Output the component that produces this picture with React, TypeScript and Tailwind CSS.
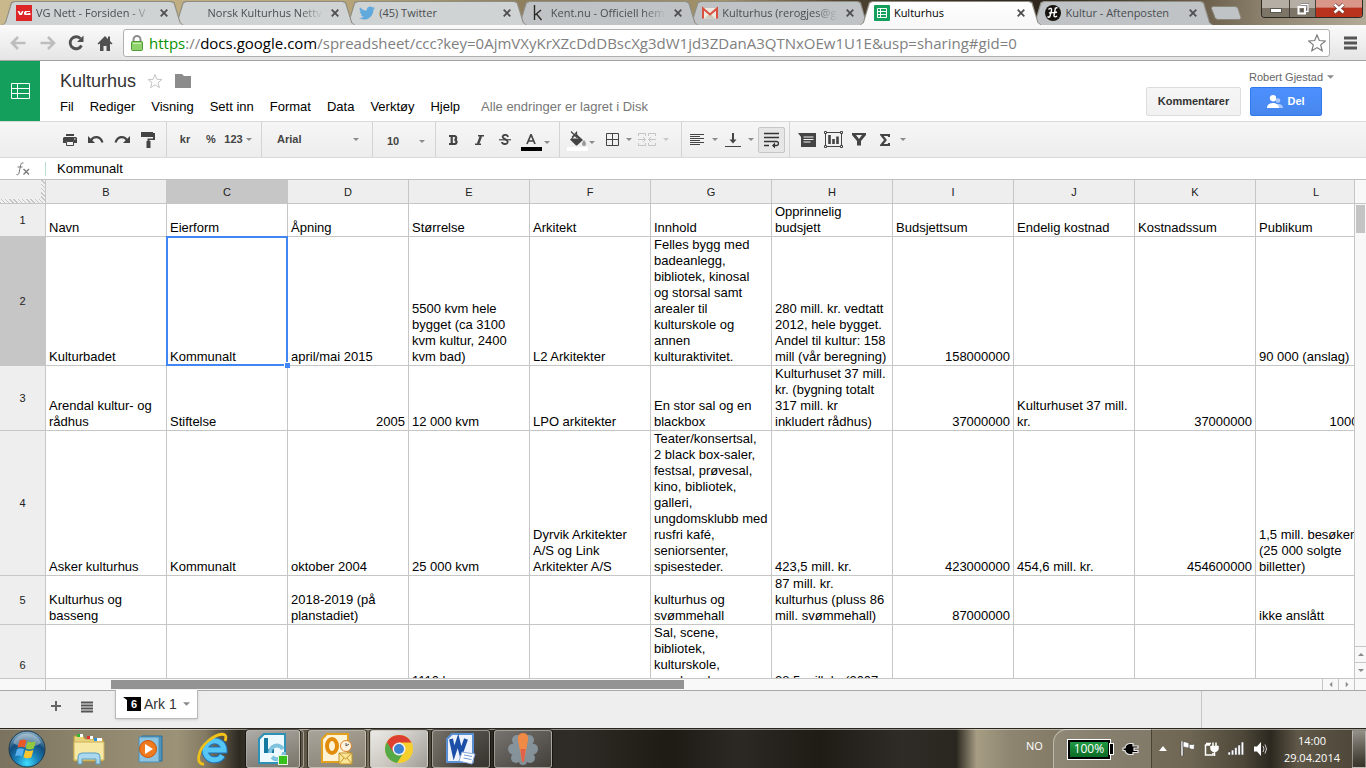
import type { ReactNode } from "react";
import clsx from "clsx";

interface BrowserTab {
  title: string;
  icon: ReactNode;
  active?: boolean;
}

interface SheetRow {
  num: number;
  cells: string[];
}

const COLUMNS = ["B", "C", "D", "E", "F", "G", "H", "I", "J", "K", "L"];
const MENUS = ["Fil", "Rediger", "Visning", "Sett inn", "Format", "Data", "Verktøy", "Hjelp"];

const ROWS: SheetRow[] = [
  {
    num: 1,
    cells: ["Navn", "Eierform", "Åpning", "Størrelse", "Arkitekt", "Innhold", "Opprinnelig\nbudsjett", "Budsjettsum", "Endelig kostnad", "Kostnadssum", "Publikum"],
  },
  {
    num: 2,
    cells: [
      "Kulturbadet",
      "Kommunalt",
      "april/mai 2015",
      "5500 kvm hele\nbygget (ca 3100\nkvm kultur, 2400\nkvm bad)",
      "L2 Arkitekter",
      "Felles bygg med\nbadeanlegg,\nbibliotek, kinosal\nog storsal samt\narealer til\nkulturskole og\nannen\nkulturaktivitet.",
      "280 mill. kr. vedtatt\n2012, hele bygget.\nAndel til kultur: 158\nmill (vår beregning)",
      "158000000",
      "",
      "",
      "90 000 (anslag)",
    ],
  },
  {
    num: 3,
    cells: [
      "Arendal kultur- og\nrådhus",
      "Stiftelse",
      "2005",
      "12 000 kvm",
      "LPO arkitekter",
      "En stor sal og en\nblackbox",
      "Kulturhuset 37 mill.\nkr. (bygning totalt\n317 mill. kr\ninkludert rådhus)",
      "37000000",
      "Kulturhuset 37 mill.\nkr.",
      "37000000",
      "100000",
    ],
  },
  {
    num: 4,
    cells: [
      "Asker kulturhus",
      "Kommunalt",
      "oktober 2004",
      "25 000 kvm",
      "Dyrvik Arkitekter\nA/S og Link\nArkitekter A/S",
      "Teater/konsertsal,\n2 black box-saler,\nfestsal, prøvesal,\nkino, bibliotek,\ngalleri,\nungdomsklubb med\nrusfri kafé,\nseniorsenter,\nspisesteder.",
      "423,5 mill. kr.",
      "423000000",
      "454,6 mill. kr.",
      "454600000",
      "1,5 mill. besøkende\n(25 000 solgte\nbilletter)",
    ],
  },
  {
    num: 5,
    cells: [
      "Kulturhus og\nbasseng",
      "",
      "2018-2019 (på\nplanstadiet)",
      "",
      "",
      "kulturhus og\nsvømmehall",
      "87 mill. kr.\nkulturhus (pluss 86\nmill. svømmehall)",
      "87000000",
      "",
      "",
      "ikke anslått",
    ],
  },
  {
    num: 6,
    cells: [
      "",
      "",
      "",
      "1110 kvm\nbrutto",
      "",
      "Sal, scene,\nbibliotek,\nkulturskole,\nungdomshus,\nkafé",
      "28,5 mill. kr (2007\nkroner)",
      "",
      "",
      "",
      "",
    ],
  },
];

const isNumber = (v: string) => /^\d+$/.test(v);

/* ---------- browser ---------- */

const TABS: BrowserTab[] = [
  {
    title: "VG Nett - Forsiden - V",
    icon: (
      <svg viewBox="0 0 16 16" className="size-4">
        <rect width="16" height="16" fill="#dd2427" />
        <path d="M1.500 6h2l1 2.500L6 6h1.500L6 10H3.500zM9.500 6H14v1H10.500v2H12.500v-.500H11V8h3.500v2H9l-1-.800V7z" fill="#fff" />
      </svg>
    ),
  },
  { title: "Norsk Kulturhus Nettv", icon: null },
  {
    title: "(45) Twitter",
    icon: (
      <svg viewBox="0 0 24 24" className="size-4" fill="#5fa9dd">
        <path d="M24 4.600a10 10 0 0 1-2.800.800 5 5 0 0 0 2.100-2.700 10 10 0 0 1-3.100 1.200 4.900 4.900 0 0 0-8.400 4.500A14 14 0 0 1 1.700 3.200a4.900 4.900 0 0 0 1.500 6.600 5 5 0 0 1-2.200-.600 4.900 4.900 0 0 0 3.900 4.900 5 5 0 0 1-2.200.100 4.900 4.900 0 0 0 4.600 3.400A10 10 0 0 1 0 19.600a14 14 0 0 0 7.500 2.200c9.100 0 14.300-7.700 14-14.600A10 10 0 0 0 24 4.600z" />
      </svg>
    ),
  },
  {
    title: "Kent.nu - Officiell hem",
    icon: (
      <svg viewBox="0 0 16 16" className="size-4" fill="none" stroke="#2b2b26" strokeWidth="1.400">
        <path d="M3.500 0v15M4 10l6-5M5.500 9l5 6" />
      </svg>
    ),
  },
  {
    title: "Kulturhus (rerogjes@g",
    icon: (
      <svg viewBox="0 0 16 16" className="size-4">
        <path d="M1 3h14v10.500H1z" fill="#ece9df" />
        <path d="M3 13.500 8 8l5 5.500z" fill="#cfcbbb" />
        <path d="M1 13.500V3.500l7 6 7-6v10" fill="none" stroke="#d95040" strokeWidth="2" />
      </svg>
    ),
  },
  {
    title: "Kulturhus",
    active: true,
    icon: (
      <svg viewBox="0 0 16 16" className="size-4">
        <rect width="16" height="16" rx="1" fill="#159f5c" />
        <path d="M3.500 3.500h9v9h-9zM3.500 6.500h9M3.500 9.500h9M6.500 3.500v9" fill="none" stroke="#fff" />
      </svg>
    ),
  },
  {
    title: "Kultur - Aftenposten",
    icon: (
      <svg viewBox="0 0 16 16" className="size-4">
        <circle cx="8" cy="8" r="8" fill="#16120e" />
        <path d="M3.500 4.500c2-2 3.500-1 3 1L5 11c0 1.500-1.500 1.500-2.500.500M10.500 2.500 9 10.500c0 2 2 1.500 3 .500M4 8c2-1 5 .500 8-1M11 3l1.500-.500" fill="none" stroke="#fff" strokeWidth="1.400" />
      </svg>
    ),
  },
];

function Tab({ tab, index }: { tab: BrowserTab; index: number }) {
  const z = ["z-[7]", "z-[6]", "z-[5]", "z-[4]", "z-[3]", "z-[8]", "z-[1]"][index];
  return (
    <div className={clsx("relative flex h-[24px] min-w-0 flex-1 items-center pr-[2px] pl-[14px]", z)}>
      <span className="absolute inset-y-0 left-0 -right-[10px] bg-[#8f8d84] [clip-path:polygon(0_100%,3px_90%,9px_5%,12px_0,calc(100%-12px)_0,calc(100%-9px)_5%,calc(100%-3px)_90%,100%_100%)]" />
      <span
        className={clsx(
          "absolute top-[1px] bottom-0 left-[1px] -right-[9px] [clip-path:polygon(0_100%,3px_90%,9px_5%,12px_0,calc(100%-12px)_0,calc(100%-9px)_5%,calc(100%-3px)_90%,100%_100%)]",
          tab.active ? "bg-gradient-to-b from-white to-[#f8f8f8]" : index < 3 ? "bg-[#cfd3d3]" : "bg-[#bfc3c6]"
        )}
      />
      <button className="relative flex min-w-0 flex-1 items-center gap-[4px]">
        <span className="size-4 shrink-0">{tab.icon}</span>
        <span
          className={clsx(
            "flex-1 overflow-hidden text-left font-['Open_Sans',sans-serif] text-[11px] leading-4 whitespace-nowrap",
            tab.title.length > 20 && "[mask-image:linear-gradient(to_right,#000_80%,transparent)]",
            tab.active ? "text-black" : "text-[#4a4d50]"
          )}
        >
          {tab.title}
        </span>
      </button>
      <button aria-label="Lukk fane" className="relative ml-[4px] flex size-4 shrink-0 items-center justify-center">
        <svg viewBox="0 0 8 8" className="size-2" stroke="#4f4f4f" strokeWidth="1.800">
          <path d="M.700.700l6.600 6.600M7.300.700.700 7.300" />
        </svg>
      </button>
    </div>
  );
}

function TabStrip() {
  return (
    <header className="relative flex h-[25px] items-end bg-[linear-gradient(90deg,#c9b88c_0,#b8a67a_25%,#8a7b5a_40%,#a3946c_53%,#4d4230_62%,#2f271d_76%,#6b5f4b_88%,#8f8571_93%,#b3aa98_100%)] pl-[2px]">
      <div className="flex min-w-0 max-w-[1201px] flex-1">
        {TABS.map((tab, i) => (
          <Tab key={tab.title} tab={tab} index={i} />
        ))}
      </div>
      <button aria-label="Ny fane" className="mb-[5px] ml-[8px] h-[14px] w-[31px]">
        <svg viewBox="0 0 31 14" className="h-[14px] w-[31px]">
          <path d="M2 .500h22q2 0 3 2l3 9q0 2-2 2H7q-2 0-3-2L.500 2.500q0-2 1.500-2z" fill="#bfc3c6" stroke="#8a8779" />
        </svg>
      </button>
      <div className="mr-[3px] ml-auto flex h-[18px] self-start overflow-hidden rounded-b-[4px] border border-t-0 border-[#2c2824]">
        <button aria-label="Minimer" className="flex w-[28px] items-center justify-center border-r border-[#443f39] bg-gradient-to-b from-[#b5aea4] from-45% to-[#7d7468] to-50%">
          <svg viewBox="0 0 12 5" className="mt-[4px] h-[5px] w-[12px]">
            <rect x=".500" y=".500" width="11" height="4" fill="#fff" stroke="#5a5650" />
          </svg>
        </button>
        <button aria-label="Gjenopprett" className="flex w-[26px] items-center justify-center border-r border-[#443f39] bg-gradient-to-b from-[#b5aea4] from-45% to-[#7d7468] to-50%">
          <svg viewBox="0 0 12 12" className="size-3" fill="none">
            <path d="M4 1.500h7v7H8.500" stroke="#555" strokeWidth="2.600" />
            <path d="M4 1.500h7v7H8.500" stroke="#fff" strokeWidth="1.400" />
            <path d="M1.500 4h6.500v6.500H1.500z" stroke="#fff" strokeWidth="2" />
            <path d="M4 6.500h1.500v1.500H4z" stroke="#555" />
          </svg>
        </button>
        <button aria-label="Lukk" className="flex w-[46px] items-center justify-center bg-gradient-to-b from-[#d9978a] from-40% to-[#b8321d] to-50%">
          <svg viewBox="0 0 12 11" className="h-[11px] w-[12px]">
            <path d="M1.500 1.500l9 8M10.500 1.500l-9 8" stroke="#6b3a33" strokeWidth="4" />
            <path d="M1.500 1.500l9 8M10.500 1.500l-9 8" stroke="#fff" strokeWidth="2.500" />
          </svg>
        </button>
      </div>
    </header>
  );
}

function AddressBar() {
  return (
    <nav className="flex h-[36px] items-center border-b border-[#a3a3a3] bg-gradient-to-b from-[#fafafa] to-[#e5e5e5] pr-[9px] pl-[10px]">
      <button aria-label="Tilbake" className="mr-[14px]">
        <svg viewBox="0 0 16 14" className="h-[14px] w-4" fill="none" stroke="#bdbdbd" strokeWidth="2.600">
          <path d="M8 1 2 7l6 6M2 7h13.500" />
        </svg>
      </button>
      <button aria-label="Fremover" className="mr-[12px]">
        <svg viewBox="0 0 16 14" className="h-[14px] w-4" fill="none" stroke="#bdbdbd" strokeWidth="2.600">
          <path d="m8 1 6 6-6 6M14 7H.500" />
        </svg>
      </button>
      <button aria-label="Last inn på nytt" className="mr-[13px]">
        <svg viewBox="0 0 16 16" className="size-4">
          <path d="M12.500 3.600A6 6 0 1 0 13.500 10.500" fill="none" stroke="#505050" strokeWidth="2.800" />
          <path d="M15.500.500V7H9z" fill="#505050" />
        </svg>
      </button>
      <button aria-label="Startside" className="mr-[10px]">
        <svg viewBox="0 0 16 16" className="size-4" fill="#505050">
          <path d="M8 1 .500 8.500l1 1L3 8.500V16h3.500v-5h3v5H13V8.500l1.500 1 1-1L13 6V1.500h-2V4z" />
        </svg>
      </button>
      <div className="flex h-[28px] min-w-0 flex-1 items-center rounded-[3px] border border-[#b0b0b0] bg-white pr-[3px] pl-[6px]">
        <svg viewBox="0 0 14 16" className="mr-[5px] h-4 w-[14px] shrink-0">
          <path d="M3.500 8V4.500a3.500 3.500 0 0 1 7 0V8" fill="none" stroke="#8d8d8d" strokeWidth="2" />
          <rect x="1.500" y="6.500" width="11" height="9" rx="1" fill="#8fd16b" stroke="#4e9a35" />
          <path d="M3 8.500h8" stroke="#c9efb4" />
        </svg>
        <div role="textbox" aria-label="Adresse" className="min-w-0 flex-1 overflow-hidden font-['Open_Sans',sans-serif] text-[15px] leading-6 whitespace-nowrap text-[#808080]">
          <span className="text-[#0a9205]">https</span>://<span className="text-black">docs.google.com</span>
          /spreadsheet/ccc?key=0AjmVXyKrXZcDdDBscXg3dW1jd3ZDanA3QTNxOEw1U1E&amp;usp=sharing#gid=0
        </div>
        <button aria-label="Bokmerk siden">
          <svg viewBox="0 0 18 18" className="size-[18px]" fill="#fff" stroke="#7d7d7d" strokeWidth="1.200">
            <path d="m9 1 2.300 5.500 6 .500-4.600 3.900 1.500 5.900L9 13.600l-5.200 3.200 1.500-5.900L.700 7l6-.500z" />
          </svg>
        </button>
      </div>
      <button aria-label="Meny" className="ml-[14px]">
        <svg viewBox="0 0 13 14" className="h-[14px] w-[13px]" fill="#555">
          <path d="M0 0.500h13v3H0zM0 5.500h13v3H0zM0 10.500h13v3H0z" />
        </svg>
      </button>
    </nav>
  );
}

/* ---------- document header ---------- */

function Caret({ light = false, className }: { light?: boolean; className?: string }) {
  return (
    <svg viewBox="0 0 6 3" className={clsx("h-[3px] w-[6px] shrink-0", className)} fill={light ? "#c8c8c8" : "#8a8a8a"}>
      <path d="M0 0h6L3 3z" />
    </svg>
  );
}

function DocHeader() {
  return (
    <div className="flex h-[60px]">
      <a href="#hjem" aria-label="Regneark" className="flex w-[40px] items-center justify-center bg-[#159f5c]">
        <svg viewBox="0 0 19 16" className="h-4 w-[19px]" fill="none" stroke="#fff">
          <path d="M.500.500h18v15H.500zM.500 5.500h18M.500 10.500h18M6.500.500v15" />
        </svg>
      </a>
      <div className="min-w-0 flex-1 pt-[8px] pl-[20px]">
        <div className="flex h-6 items-center">
          <h1 className="text-[18px] leading-6 text-[#333]">Kulturhus</h1>
          <button aria-label="Stjernemerk" className="ml-[11px]">
            <svg viewBox="0 0 16 16" className="size-4" fill="none" stroke="#c4c4c4">
              <path d="m8 1.500 1.800 4.800 5.200.200-4 3.200 1.400 5L8 11.800l-4.400 2.900 1.400-5-4-3.200 5.200-.200z" />
            </svg>
          </button>
          <button aria-label="Flytt til mappe" className="ml-[12px]">
            <svg viewBox="0 0 16 14" className="h-[14px] w-4" fill="#8c8c8c">
              <path d="M0 0h7l2 2h7v12H0z" />
            </svg>
          </button>
        </div>
        <div className="mt-[6px] flex gap-4 text-[13px] leading-4 whitespace-nowrap text-black">
          {MENUS.map((m) => (
            <button key={m}>{m}</button>
          ))}
          <span className="ml-[5px] text-[#777]">Alle endringer er lagret i Disk</span>
        </div>
      </div>
      <div className="pt-[9px] pr-[32px]">
        <button className="ml-auto flex h-[14px] items-center gap-[4px] text-[11px] leading-[14px] text-[#666]">
          Robert Gjestad
          <Caret className="!h-[4px] !w-[7px]" />
        </button>
        <div className="mt-[3px] mr-[12px] flex gap-[9px] text-[11px] font-bold">
          <button className="h-[29px] w-[95px] rounded-[2px] border border-[#dcdcdc] bg-gradient-to-b from-[#f6f6f6] to-[#f1f1f1] text-[#333]">
            Kommentarer
          </button>
          <button className="flex h-[29px] w-[72px] items-center justify-center gap-[4px] rounded-[2px] border border-[#3079ed] bg-gradient-to-b from-[#4d90fe] to-[#4787ed] text-white">
            <svg viewBox="0 0 16 13" className="h-[13px] w-4">
              <circle cx="11" cy="5.500" r="2.300" fill="#a9c9ff" />
              <path d="M8 13c0-3 1.500-4 3.500-4s4.500 1 4.500 4z" fill="#a9c9ff" />
              <circle cx="6" cy="3.200" r="3.200" fill="#fff" />
              <path d="M0 13c0-3.500 3-5 6-5s6 1.500 6 5z" fill="#fff" />
            </svg>
            Del
          </button>
        </div>
      </div>
    </div>
  );
}

/* ---------- toolbar ---------- */

function Group({ className, children }: { className?: string; children: ReactNode }) {
  return <div className={clsx("flex shrink-0 items-center border-r border-[#d4d4d4]", className)}>{children}</div>;
}

function Tool({ label, className, children }: { label: string; className?: string; children: ReactNode }) {
  return (
    <button aria-label={label} className={clsx("flex h-[26px] shrink-0 items-center justify-center", className ?? "w-[26px]")}>
      {children}
    </button>
  );
}

function Toolbar() {
  return (
    <div className="flex h-[37px] overflow-hidden border-y border-[#d9d9d9] bg-gradient-to-b from-[#f6f6f6] to-[#ededed] text-[11px] font-bold text-[#444]">
      <Group className="w-[167px] pl-[57px]">
        <Tool label="Skriv ut">
          <svg viewBox="0 0 14 12" className="h-3 w-[14px]" fill="#444">
            <path d="M3 0h8v2H3zM1 3h12l1 1v5h-3V7H3v2H0V4z" />
            <path d="M3.500 7.500h7v4h-7z" fill="#f4f4f4" stroke="#444" />
            <path d="M11 4.500h1.500v1H11z" fill="#fff" />
          </svg>
        </Tool>
        <Tool label="Angre">
          <svg viewBox="0 0 16 9" className="h-[9px] w-4">
            <path d="M0 1v7h7z" fill="#444" />
            <path d="M3 5c3-4 9-4.500 11.500 2.500" fill="none" stroke="#444" strokeWidth="2.200" />
          </svg>
        </Tool>
        <Tool label="Gjør om">
          <svg viewBox="0 0 16 9" className="h-[9px] w-4">
            <path d="M16 1v7H9z" fill="#444" />
            <path d="M13 5C10 1 4 .500 1.500 7.500" fill="none" stroke="#444" strokeWidth="2.200" />
          </svg>
        </Tool>
        <Tool label="Kopier format">
          <svg viewBox="0 0 14 16" className="h-4 w-[14px]" fill="#444">
            <path d="M0 0h12v5H0zM12 1h2v7H8.500v2h-2V6.500H12zM5.500 9h4v7h-4z" />
          </svg>
        </Tool>
      </Group>
      <Group className="w-[95px] pl-[5px]">
        <Tool label="Formater som valuta">kr</Tool>
        <Tool label="Formater som prosent">%</Tool>
        <Tool label="Flere formater" className="w-[28px] gap-[3px]">
          123 <Caret />
        </Tool>
      </Group>
      <Group className="w-[111px]">
        <Tool label="Skrift" className="ml-[15px] w-[82px] !justify-between">
          Arial <Caret />
        </Tool>
      </Group>
      <Group className="w-[63px]">
        <Tool label="Skriftstørrelse" className="mt-[3px] ml-[14px] w-[38px] !justify-between">
          10 <Caret />
        </Tool>
      </Group>
      <Group className="w-[124px] pl-[4px]">
        <Tool label="Fet">
          <svg viewBox="0 0 9 10" className="h-[10px] w-[9px]">
            <path d="M0 1h5c3 0 2.700 3.600.500 3.900 3 .300 2.700 4.100-.500 4.100H0M2.700 1v8" fill="none" stroke="#444" strokeWidth="2.200" />
          </svg>
        </Tool>
        <Tool label="Kursiv">
          <svg viewBox="0 0 9 10" className="h-[10px] w-[9px]" fill="none" stroke="#444" strokeWidth="1.600">
            <path d="M3 .800h6M0 9.200h6" />
            <path d="M6 1 3 9" strokeWidth="2.400" />
          </svg>
        </Tool>
        <Tool label="Gjennomstreking">
          <svg viewBox="0 0 12 11" className="h-[11px] w-3" fill="none" stroke="#444" strokeWidth="1.900">
            <path d="M9 3C8.500 0 3.500.300 3.700 3c.100 2 5.300 2.500 5 5-.300 3-5.500 2.500-5.700 0" />
            <path d="M0 5.800h12" strokeWidth="1.200" />
          </svg>
        </Tool>
        <Tool label="Tekstfarge">
          <svg viewBox="0 0 21 17" className="mt-[5px] h-[17px] w-[21px]">
            <path d="m6 10 4-9.500L14 10M7.300 7h5.400" fill="none" stroke="#444" strokeWidth="1.700" />
            <rect y="13" width="21" height="4" />
          </svg>
        </Tool>
        <Caret className="mt-[5px]" />
      </Group>
      <Group className="w-[122px] pl-[5px]">
        <Tool label="Fyllfarge" className="w-[24px]">
          <svg viewBox="0 0 21 20" className="mt-[2px] h-5 w-[21px]">
            <path d="M3 8.500 9.500 3l6.500 6-6 5.500H9z" fill="#444" />
            <path d="M5.500 7.500h6l-3-3z" fill="#f4f4f4" />
            <path d="m4 .500 6.500 6.500M5 6.500 9.500 1.500V5" fill="none" stroke="#444" strokeWidth="1.300" />
            <path d="M17 9c1.500 2 2 3 2 4a2 2 0 0 1-4 0c0-1 .500-2 2-4z" fill="#999" />
            <rect y="16" width="21" height="4" fill="#fff" />
          </svg>
        </Tool>
        <Caret className="mt-[5px]" />
        <Tool label="Kantlinjer" className="ml-[8px] w-[18px]">
          <svg viewBox="0 0 13 13" className="size-[13px]" fill="none" stroke="#444">
            <path d="M.500.500h12v12H.500zM6.500.500v12M.500 6.500h12" />
          </svg>
        </Tool>
        <Caret className="ml-[5px]" />
        <Tool label="Slå sammen celler" className="ml-[5px] w-[20px]">
          <svg viewBox="0 0 18 13" className="h-[13px] w-[18px]" fill="none" stroke="#c4c4c4">
            <path d="M7.500 3V.500h-7V3M.500 10v2.500h7V10M10.500 3V.500h7V3M17.500 10v2.500h-7V10M0 6.500h7M18 6.500h-7M5 4l2.500 2.500L5 9M13 4l-2.500 2.500L13 9" />
          </svg>
        </Tool>
        <Caret light className="ml-[6px]" />
      </Group>
      <Group className="w-[108px] pl-[4px]">
        <Tool label="Vannrett justering" className="w-[22px]">
          <svg viewBox="0 0 15 11" className="h-[11px] w-[15px]" stroke="#444">
            <path d="M0 .500h14M0 2.500h10M0 4.500h14M0 6.500h10M0 8.500h14M0 10.500h10" />
          </svg>
        </Tool>
        <Caret className="ml-[4px]" />
        <Tool label="Loddrett justering" className="ml-[4px] w-[22px]">
          <svg viewBox="0 0 16 14" className="h-[14px] w-4" fill="none" stroke="#444">
            <path d="M8 0v8" strokeWidth="2" />
            <path d="M4.500 6.500h7L8 10.500z" fill="#444" stroke="none" />
            <path d="M0 13.500h16" />
          </svg>
        </Tool>
        <Caret className="ml-[4px]" />
        <Tool label="Tekstbryting" className="ml-[4px] w-[27px] rounded-[2px] border border-[#c6c6c6] bg-[#e6e6e6]">
          <svg viewBox="0 0 15 16" className="h-4 w-[15px]" fill="none" stroke="#333" strokeWidth="1.300">
            <path d="M0 1.500h15M0 5.500h15M0 9.500h12.500a2 2 0 0 1 0 4H9M0 13.500h5" />
            <path d="m11 10.500-3 3 3 3z" fill="#333" stroke="none" />
          </svg>
        </Tool>
      </Group>
      <div className="flex items-center pl-[4px]">
        <Tool label="Sett inn kommentar">
          <svg viewBox="0 0 18 14" className="h-[14px] w-[18px]" fill="#444">
            <path d="M0 0h18v14H3V4z" />
            <path d="M5.500 4h10M5.500 6.500h10M5.500 9h7" stroke="#f4f4f4" />
          </svg>
        </Tool>
        <Tool label="Sett inn diagram">
          <svg viewBox="0 0 19 17" className="h-[17px] w-[19px]" fill="none" stroke="#444">
            <path d="M1.500 1.500h16v14h-16z" />
            <path d="M.500.500h2v2h-2zM16.500.500h2v2h-2zM.500 14.500h2v2h-2zM16.500 14.500h2v2h-2z" fill="#f4f4f4" />
            <path d="M5.500 4v9M9.500 8v5M13.500 5.500V13" strokeWidth="2.600" />
          </svg>
        </Tool>
        <Tool label="Filter">
          <svg viewBox="0 0 14 13" className="h-[13px] w-[14px]" fill="#444">
            <path d="M0 0h14v2L9 8v4.500H5V8L0 2zM4 2l3 4 3-4z" fillRule="evenodd" />
          </svg>
        </Tool>
        <Tool label="Funksjoner">
          <svg viewBox="0 0 10 12" className="h-3 w-[10px]" fill="none" stroke="#444" strokeWidth="2.200">
            <path d="M9 3V1H1.500l4 5-4 5H9V9" />
          </svg>
        </Tool>
        <Caret className="ml-[2px]" />
      </div>
    </div>
  );
}

/* ---------- sheet ---------- */

function FormulaBar() {
  return (
    <div className="flex h-[22px] items-center border-b border-[#c0c0c0] bg-white">
      <label htmlFor="formula" aria-label="Formel" className="flex w-[46px] justify-center border-r border-[#b9e0cc]">
        <svg viewBox="0 0 14 14" className="h-[14px] w-[14px]" fill="none" stroke="#777">
          <path d="M7.500 1C5 .500 4.800 2 4.500 4L3 11c-.300 1.500-1 2-2.500 1.500M1.500 5h5" />
          <path d="m7.500 7 5.500 5.500M13 7l-5.500 5.500" strokeWidth="1.300" />
        </svg>
      </label>
      <input id="formula" defaultValue="Kommunalt" className="h-4 min-w-0 flex-1 bg-transparent pl-[11px] text-[13px] leading-4 text-black outline-none" />
    </div>
  );
}

function Sheet() {
  return (
    <div className="flex min-h-0 flex-1">
      <div className="min-w-0 flex-1 overflow-hidden border-r border-[#c6c6c6]">
        <table className="w-[1377px] table-fixed border-separate border-spacing-0 text-[13px] leading-4 text-black">
          <colgroup>
            <col className="w-[46px]" />
            {COLUMNS.map((c) => (
              <col key={c} className="w-[121px]" />
            ))}
          </colgroup>
          <thead>
            <tr className="h-[24px] text-[11px]">
              <td className="border-r border-b border-[#c6c6c6] bg-[repeating-linear-gradient(45deg,#c6c6c6_0_1px,#f0f0f0_1px_3px)] p-0 pr-[4px] pb-[4px]">
                <div className="h-[19px] bg-[#eee]" />
              </td>
              {COLUMNS.map((c) => (
                <th key={c} className={clsx("border-r border-b border-[#c6c6c6] p-0 font-normal text-[#222]", c === "C" ? "bg-[#c6c6c6]" : "bg-[#eee]")}>
                  {c}
                </th>
              ))}
            </tr>
          </thead>
          <tbody>
            {ROWS.map((row) => (
              <tr key={row.num}>
                <th className={clsx("border-r border-b border-[#c6c6c6] p-0 text-[11px] font-normal text-[#222]", row.num === 2 ? "bg-[#c6c6c6]" : "bg-[#eee]")}>
                  {row.num}
                </th>
                {row.cells.map((value, i) => (
                  <td
                    key={i}
                    className={clsx(
                      "relative border-r border-b border-[#c6c6c6] px-[3px] py-0 align-bottom whitespace-pre",
                      isNumber(value) && "text-right"
                    )}
                  >
                    {value}
                    {/* active cell outline and fill handle */}
                    {row.num === 2 && i === 1 && (
                      <span className="pointer-events-none absolute -inset-px z-10 border-2 border-[#4285f4]">
                        <span className="absolute -right-[4px] -bottom-[4px] size-[6px] border-t border-l border-white bg-[#4285f4]" />
                      </span>
                    )}
                  </td>
                ))}
              </tr>
            ))}
          </tbody>
        </table>
      </div>
      <div className="flex w-[11px] flex-col bg-[#f8f8f8]">
        <div className="h-[24px] border-b border-[#c6c6c6]" />
        <div className="flex-1 px-px pt-px">
          <div className="h-[28px] bg-[#c4c4c4]" />
        </div>
        <button aria-label="Rull opp" className="flex h-[16px] items-center justify-center border-t border-[#c6c6c6]">
          <Caret className="rotate-180" />
        </button>
        <button aria-label="Rull ned" className="flex h-[16px] items-center justify-center border-t border-[#c6c6c6]">
          <Caret />
        </button>
      </div>
    </div>
  );
}

function HorizontalScroll() {
  return (
    <div className="flex h-[12px] border-t border-[#c6c6c6] bg-[#f8f8f8]">
      <div className="w-[46px] border-r border-[#c6c6c6]" />
      <div className="flex-1 py-px pl-[65px]">
        <div className="h-[9px] w-[573px] bg-[#939393]" />
      </div>
      <button aria-label="Rull til venstre" className="flex w-[16px] items-center justify-center border-l border-[#c6c6c6]">
        <Caret className="rotate-90" />
      </button>
      <button aria-label="Rull til høyre" className="flex w-[17px] items-center justify-center border-x border-[#c6c6c6]">
        <Caret className="-rotate-90" />
      </button>
      <div className="w-[11px]" />
    </div>
  );
}

function SheetTabs() {
  return (
    <div className="flex h-[38px] border-t border-[#a8a8a8] bg-[#eee]">
      <button aria-label="Legg til ark" className="mt-[10px] ml-[51px] size-[10px]">
        <svg viewBox="0 0 10 10" className="size-[10px]" stroke="#666" strokeWidth="2">
          <path d="M5 0v10M0 5h10" />
        </svg>
      </button>
      <button aria-label="Alle ark" className="mt-[10px] ml-[20px] h-3 w-3">
        <svg viewBox="0 0 12 12" className="size-3" stroke="#555" strokeWidth="1.800">
          <path d="M0 1.500h12M0 4.500h12M0 7.500h12M0 10.500h12" />
        </svg>
      </button>
      <button className="-mt-px ml-[22px] flex h-[29px] w-[83px] items-center border border-t-0 border-[#b9b9b9] bg-white pl-[7px] text-[14px] text-[#333] shadow-sm">
        <span className="relative mr-[3px] h-[14px] w-[18px]">
          <svg viewBox="0 0 18 14" className="absolute inset-0 h-[14px] w-[18px]">
            <path d="M0 0h18v14H4V3z" />
          </svg>
          <span className="absolute inset-y-0 right-0 left-[4px] text-center text-[11px] leading-[14px] font-bold text-white">6</span>
        </span>
        Ark 1
        <Caret className="ml-[6px] !h-[4px] !w-[7px]" />
      </button>
      <div className="flex-1" />
      <div className="w-[165px] border-l border-[#c6c6c6]" />
    </div>
  );
}

/* ---------- taskbar ---------- */

function TaskButton({ label, className, children }: { label: string; className?: string; children: ReactNode }) {
  return (
    <button
      aria-label={label}
      className={clsx(
        "flex h-[38px] w-[58px] shrink-0 items-center justify-center rounded-[3px] border border-[#d5d0c4]/60 shadow-[0_0_0_1px_rgba(0,0,0,0.5)]",
        className
      )}
    >
      {children}
    </button>
  );
}

function Taskbar() {
  return (
    <footer className="flex h-[40px] items-center overflow-hidden border-t border-[#2a261e] bg-[linear-gradient(90deg,#7a725e_0,#8d846c_6%,#9c9278_13%,#857b64_15%,#2e2a22_17.500%,#4a4438_20%,#6d6552_24%,#7b725e_28%,#2d2923_34%,#2f2b26_42%,#1e1b15_49%,#2c2925_54%,#1f1c16_60%,#2f2c28_66%,#2a2720_70%,#a69d83_71.500%,#8e8571_74%,#7c735f_80%,#6f6754_87%,#4d4739_91%,#2c281f_93%,#5f5848_95%,#4a4437_100%)] shadow-[inset_0_1px_0_rgba(255,255,255,0.45)]">
      <button aria-label="Start" className="ml-[8px] size-[38px] shrink-0">
        <svg viewBox="0 0 38 38" className="size-[38px]">
          <defs>
            <radialGradient id="orb" cx="50%" cy="90%" r="85%">
              <stop offset="0" stopColor="#3fe0ff" />
              <stop offset=".350" stopColor="#1a86bd" />
              <stop offset=".700" stopColor="#124d7d" />
              <stop offset="1" stopColor="#7fa6bd" />
            </radialGradient>
          </defs>
          <circle cx="19" cy="19" r="18" fill="url(#orb)" stroke="#1d3b50" />
          <path d="M5 13a15 15 0 0 1 28 0c-6 5-20 6-28 0z" fill="#fff" opacity=".350" />
          <path d="M11.500 10.500c3-1.700 5-1.200 7 0l-2 7.300c-2-1.200-4-1.500-7 0z" fill="#e8592a" />
          <path d="M19.800 11.300c2 1.200 4.500 1.500 8 0l-2 7.300c-3 1.400-5.500 1.200-8 0z" fill="#92c83e" />
          <path d="M9 19.300c3-1.600 5-1.200 7 0l-2 7.200c-2-1.200-4.500-1.500-7 0z" fill="#58b1ee" />
          <path d="M17.400 20c2 1.300 5 1.500 8 0l-2 7.300c-3 1.400-6 1.200-8-.100z" fill="#fbc52e" />
        </svg>
      </button>
      <button aria-label="Utforsker" className="ml-[26px] shrink-0">
        <svg viewBox="0 0 34 32" className="h-8 w-[34px]">
          <path d="M2 3h9l2 3h18v22H2z" fill="#e8d27a" stroke="#b99a3e" />
          <path d="M5 2.500h6M15 4.500h6M22 6.500h8" stroke="#fff" strokeWidth="3" />
          <path d="M5 2.500h3" stroke="#2fb52f" strokeWidth="3" />
          <path d="M15 4.500h3" stroke="#d33" strokeWidth="3" />
          <path d="M22 6.500h3" stroke="#2b8fd8" strokeWidth="3" />
          <path d="M2 9h30v18H2z" fill="#f7e9a3" stroke="#cdb25a" />
          <path d="M6 31V24q0-4 4-4h14q4 0 4 4v7h-4v-5H10v5z" fill="#a9d8ef" stroke="#5b9fc4" />
        </svg>
      </button>
      <button aria-label="Mediespiller" className="ml-[31px] shrink-0">
        <svg viewBox="0 0 30 28" className="h-7 w-[30px]">
          <path d="M5 1h20v25H5z" fill="#4d93bd" stroke="#2f6f97" />
          <path d="M2 2h20v25H2z" fill="#8cc4e2" stroke="#4d8fb5" />
          <circle cx="11" cy="14" r="8.500" fill="#f07a1e" stroke="#c9560d" />
          <path d="m8 9 8 5-8 5z" fill="#fff" />
        </svg>
      </button>
      <button aria-label="Internet Explorer" className="ml-[28px] shrink-0">
        <svg viewBox="0 0 36 34" className="h-[34px] w-9">
          <path d="M27.500 23.500a9.500 9.500 0 1 1 1.500-5.500H12" fill="none" stroke="#1b74bd" strokeWidth="7" />
          <path d="M27.500 23.500a9.500 9.500 0 1 1 1.500-5.500H12" fill="none" stroke="#56c6f5" strokeWidth="5" />
          <path d="M9 32C0 33 3 17 13 9S34-1 30 9" fill="none" stroke="#f0c11a" strokeWidth="2.800" />
        </svg>
      </button>
      <TaskButton label="Lync" className="ml-[15px] !w-[54px] bg-gradient-to-br from-white/60 to-white/20">
        <svg viewBox="0 0 32 34" className="h-[34px] w-8">
          <path d="M7 2h21v25l-6 4H2V7z" fill="#eef9fd" stroke="#2c92b8" strokeWidth="2" />
          <path d="M9 6v13h8" fill="none" stroke="#16799f" strokeWidth="4" />
          <path d="M13 21a7 7 0 0 1 13-4M27 20a7 7 0 0 1-12 5" fill="none" stroke="#7fc3de" strokeWidth="4" />
          <rect x="21.500" y="23.500" width="9" height="9" fill="#38c11c" stroke="#e3f6dd" />
        </svg>
      </TaskButton>
      <div className="h-[38px] w-[4px] shrink-0 rounded-r-[3px] border border-l-0 border-[#d5d0c4]/60" />
      <TaskButton label="Outlook" className="ml-[4px] bg-gradient-to-br from-white/45 to-white/15">
        <svg viewBox="0 0 32 34" className="h-[34px] w-8">
          <path d="M6 2h21v28H1V7z" fill="#fdf4d8" stroke="#e3a01d" strokeWidth="2" />
          <ellipse cx="11" cy="14" rx="5" ry="7" fill="none" stroke="#e38c0c" strokeWidth="4" />
          <circle cx="25" cy="14" r="5.500" fill="#fff3dd" stroke="#d9822b" />
          <path d="M25 11v3l3-2" fill="none" stroke="#555" />
          <path d="M18 21h13v11H18z" fill="#fbe596" stroke="#c5952b" />
          <path d="m18 21 6.500 6 6.500-6M18 32l5-6M31 32l-5-6" fill="none" stroke="#c5952b" />
        </svg>
      </TaskButton>
      <TaskButton label="Chrome" className="ml-[4px] bg-gradient-to-br from-white/85 to-white/45">
        <svg viewBox="0 0 30 30" className="size-[30px]">
          <circle cx="15" cy="15" r="14" fill="#f7cf2c" />
          <path d="M2.900 8A14 14 0 0 0 13 28.900L20 18l-5-3z" fill="#55a946" />
          <path d="M2.900 8A14 14 0 0 1 27.500 8.500H15L9 18z" fill="#dd3f31" />
          <circle cx="15" cy="15" r="6.500" fill="#f2f2f2" />
          <circle cx="15" cy="15" r="5" fill="#3d82d0" />
        </svg>
      </TaskButton>
      <TaskButton label="Word" className="ml-[4px] bg-gradient-to-br from-white/25 to-white/5">
        <svg viewBox="0 0 32 34" className="h-[34px] w-8">
          <path d="M7 2h21v28H2V7z" fill="#eef3fb" stroke="#5b8fd4" strokeWidth="2" />
          <path d="m6 7 3 14 4-12 3 12 5-14" fill="none" stroke="#1c4fa8" strokeWidth="4" />
          <path d="m17 20 13 2-3 10-13-3z" fill="#fff" stroke="#8aa9d6" />
          <path d="m19 23 8 1.500M18.500 26l8 1.500" stroke="#6e98d4" />
        </svg>
      </TaskButton>
      <TaskButton label="Bilder" className="ml-[4px] bg-gradient-to-br from-white/35 to-white/10">
        <svg viewBox="0 0 30 34" className="h-[34px] w-[30px]">
          <g fill="#8e9da6" opacity=".850">
            <circle cx="9" cy="8" r="5" />
            <circle cx="21" cy="8" r="5" />
            <circle cx="5.500" cy="17" r="5.500" />
            <circle cx="24.500" cy="17" r="5.500" />
            <circle cx="8" cy="26" r="5" />
            <circle cx="22" cy="26" r="5" />
            <circle cx="15" cy="29" r="4" />
            <path d="M8 8h14v18H8z" />
          </g>
          <path d="M15 1c-4 0-5.500 3-5 7l4 21h2l4-21C20.500 4 19 1 15 1z" fill="#f08a45" />
          <path d="m12.500 17 1.500 13h2l1.500-13z" fill="#e0604a" />
        </svg>
      </TaskButton>

      <div className="ml-auto flex h-full shrink-0 items-center font-['Open_Sans',sans-serif] text-[11px] text-white">
        <span className="mr-[10px] mb-[4px]">NO</span>
        <div className="flex h-full w-[99px] items-center rounded-tl-[14px] border-t border-r border-l border-t-white/40 border-r-[#4a4436] border-l-white/40 bg-white/10 pl-[14px]">
          <span className="flex h-[19px] w-[42px] items-center justify-center border-2 border-black bg-gradient-to-b from-[#1f9a41] to-[#0b6b26] text-[12px] leading-[14px] outline outline-white">
            100%
          </span>
          <span className="h-[10px] w-[3px] bg-black outline outline-white" />
          <svg viewBox="-1 -1 18 14" className="ml-[9px] h-[14px] w-[18px]" stroke="#e6e6e6" strokeWidth="1.200">
            <path d="M0 5h2c0-3 3-4.500 5-4.500h3V3h5v2h-4v2.500h4v2h-5v2H7C5 11.500 2 10 2 7.500H0z" />
          </svg>
        </div>
        <button aria-label="Vis skjulte ikoner" className="ml-[7px]">
          <svg viewBox="0 0 8 5" className="h-[5px] w-2" fill="#fff">
            <path d="M0 5h8L4 0z" />
          </svg>
        </button>
        <svg viewBox="0 0 16 15" className="ml-[13px] h-[15px] w-4" fill="#fff" stroke="#333" strokeWidth=".500">
          <path d="M1 0h2v15H1zM3 1c3-1 4 1 6 1v5c-2 0-3-1.500-6-.500zM9 3c2 1 4 .500 6 0-1 2-1 3-.500 5-2 .500-3.500.500-5.500-1z" />
        </svg>
        <svg viewBox="0 0 16 16" className="ml-[8px] size-4" fill="none" stroke="#fff" strokeWidth="1.500">
          <path d="M2 2.500h5M6 4H1.500v10H9v-2" />
          <path d="M7 5.500h7v2c0 2-2 3-3.500 3S7 9.500 7 7.500zM9 5V1.500M12 5V1.500M10.500 10v5" fill="#fff" />
        </svg>
        <svg viewBox="0 0 16 13" className="ml-[8px] h-[13px] w-4" fill="#fff" stroke="#333" strokeWidth=".500">
          <path d="M0 10h2.500v3H0zM3.300 8h2.500v5H3.300zM6.600 5.500h2.500V13H6.600zM9.900 3h2.500v10H9.900zM13.200 0h2.500v13h-2.500z" />
        </svg>
        <svg viewBox="0 0 13 14" className="ml-[10px] h-[14px] w-[13px]">
          <path d="M0 4.500h3L7 0v14l-4-4.500H0z" fill="#fff" />
          <path d="M9 4q2 3 0 6M11 2.500q3 4.500 0 9" fill="none" stroke="#ccc" />
        </svg>
        <div className="ml-[17px] text-center leading-[17px]">
          <div>14:00</div>
          <div>29.04.2014</div>
        </div>
        <button aria-label="Vis skrivebord" className="ml-[12px] h-[38px] w-[14px] border border-white/40 bg-gradient-to-b from-white/40 to-black/20" />
      </div>
    </footer>
  );
}

export default function App() {
  return (
    <div className="flex h-screen flex-col overflow-hidden bg-white font-['Liberation_Sans',Arial,sans-serif]">
      <TabStrip />
      <AddressBar />
      <DocHeader />
      <Toolbar />
      <FormulaBar />
      <Sheet />
      <HorizontalScroll />
      <SheetTabs />
      <Taskbar />
    </div>
  );
}
